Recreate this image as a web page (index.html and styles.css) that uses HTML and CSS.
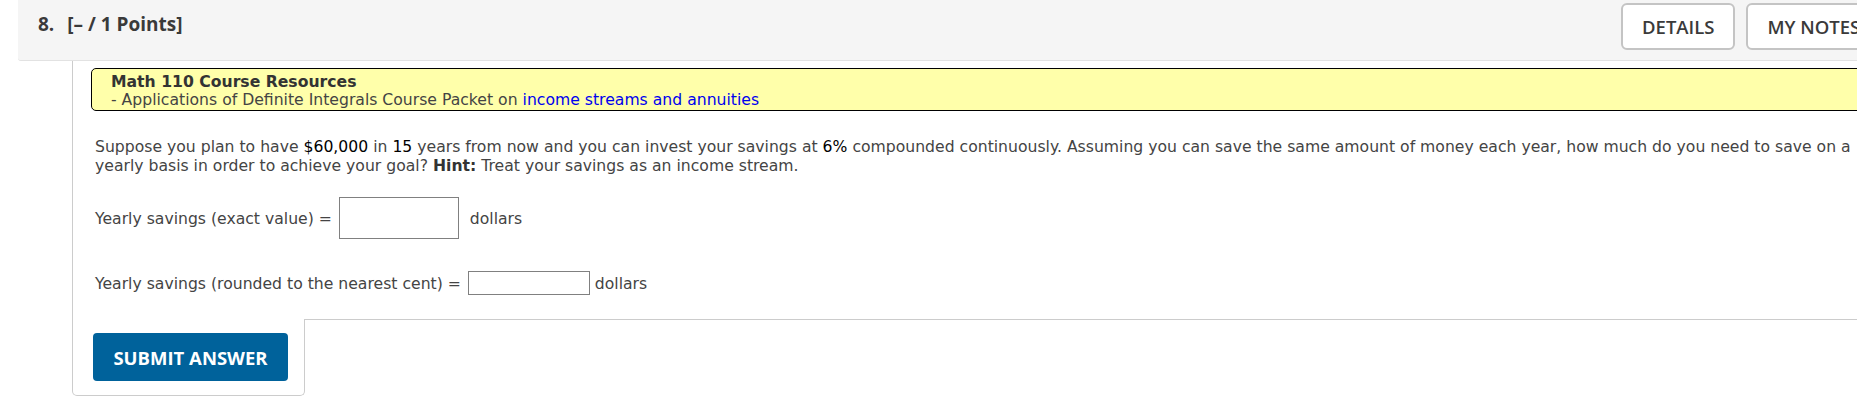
FILE: index.html
```html
<!DOCTYPE html>
<html lang="en">
<head>
<meta charset="utf-8">
<title>Question 8</title>
<link rel="stylesheet" href="styles.css">
</head>
<body>
<div class="page">
  <div class="q-header">
    <div class="q-title"><span class="q-num">8.</span>[– / 1 Points]</div>
    <div class="q-actions">
      <button class="btn-outline">DETAILS</button>
      <button class="btn-outline">MY NOTES</button>
    </div>
  </div>
  <div class="q-body">
    <div class="resources">
      <div class="res-title">Math 110 Course Resources</div>
      <div class="res-line">- Applications of Definite Integrals Course Packet on <a class="res-link" href="#">income streams and annuities</a></div>
    </div>
    <p class="prompt">Suppose you plan to have <span class="val">$60,000</span> in <span class="val">15</span> years from now and you can invest your savings at <span class="val">6%</span> compounded continuously. Assuming you can save the same amount of money each year, how much do you need to save on a<br>yearly basis in order to achieve your goal? <b>Hint:</b> Treat your savings as an income stream.</p>
    <div class="answer-row row-exact">Yearly savings (exact value) = <input class="ans ans-big" type="text" aria-label="exact value"> <span class="unit unit-wide">dollars</span></div>
    <div class="answer-row row-cent">Yearly savings (rounded to the nearest cent) = <input class="ans ans-small" type="text" aria-label="rounded value"> <span class="unit">dollars</span></div>
  </div>
  <div class="q-footer">
    <div class="submit-tab"><button class="submit">SUBMIT ANSWER</button></div>
    <div class="footer-fill"></div>
  </div>
</div>
</body>
</html>
```
FILE: styles.css
```css
html, body {
  margin: 0;
  padding: 0;
  overflow: hidden;
  background: #fff;
}

.page {
  width: 1900px;
  margin-left: 18px;
  font-family: "DejaVu Sans", Verdana, sans-serif;
  font-size: 15.65px;
  color: #444;
}

.q-header {
  display: flex;
  align-items: flex-start;
  height: 61px;
  padding: 3px 0 0 20px;
  box-sizing: border-box;
  background: #f5f5f5;
  border-bottom: 1px solid #e2e2e2;
  border-bottom-left-radius: 3px;
}

.q-title {
  flex: 0 0 1583px;
  margin-top: 8px;
  font-family: "Open Sans", sans-serif;
  font-weight: 700;
  font-size: 19px;
  color: #3a3a3a;
}

.q-num {
  margin-right: 13px;
}

.q-actions {
  display: flex;
  gap: 11px;
  flex: none;
}

.btn-outline {
  height: 47px;
  box-sizing: border-box;
  background: #fff;
  border: 2px solid #c4c4c4;
  border-radius: 6px;
  font-family: "Open Sans", sans-serif;
  font-weight: 600;
  font-size: 18.5px;
  color: #3a3a3a;
  padding: 0 19px;
  white-space: nowrap;
}

.q-body {
  margin-left: 54px;
  border-left: 1px solid #ccc;
  padding: 7px 0 24px 18px;
}

.resources {
  background: #ffffaa;
  border: 1px solid #000;
  border-radius: 5px;
  padding: 4px 19px 1px;
  line-height: 18px;
}

.res-title {
  font-weight: 700;
  color: #333;
}

.res-line {
  color: #444;
}

.res-link {
  color: #0000ee;
  text-decoration: none;
}

.prompt {
  margin: 26px 0 0 4px;
  line-height: 19px;
  white-space: nowrap;
}

.val {
  color: #000;
}

.prompt b {
  color: #333;
}

.answer-row {
  margin-left: 4px;
  line-height: 19px;
}

.row-exact { margin-top: 22px; }
.row-cent { margin-top: 32px; }

.ans {
  box-sizing: border-box;
  border: 1px solid #808080;
  background: #fff;
  margin: 0 0 0 2px;
  padding: 0 4px;
  font: inherit;
  outline: none;
}

.ans-big {
  width: 120px;
  height: 42px;
}

.ans-small {
  width: 122px;
  height: 24px;
}

.unit-wide {
  margin-left: 6px;
}

.q-footer {
  display: flex;
  align-items: flex-start;
  margin-left: 54px;
}

.submit-tab {
  border: 1px solid #ccc;
  border-top: none;
  border-radius: 0 0 5px 5px;
  padding: 14px 16px 14px 20px;
}

.submit {
  display: block;
  width: 195px;
  height: 48px;
  border: none;
  border-radius: 4px;
  background: #00629b;
  color: #fff;
  font-family: "Open Sans", sans-serif;
  font-weight: 700;
  font-size: 18.5px;
  padding: 0;
}

.footer-fill {
  flex: 1;
  border-top: 1px solid #ccc;
}
```
